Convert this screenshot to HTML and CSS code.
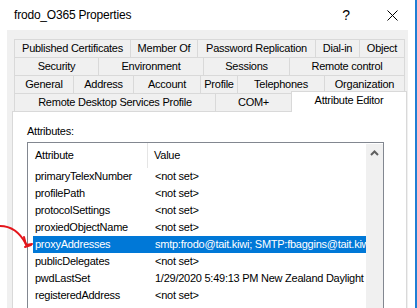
FILE: index.html
```html
<!DOCTYPE html>
<html lang="en">
<head>
  <meta charset="UTF-8" />
  <title>frodo_O365 Properties</title>
  <link rel="stylesheet" href="styles.css">
</head>
<body>
  <div class="window">
    <div class="titlebar">
      <span class="title">frodo_O365 Properties</span>
      <span class="caption-btn help">?</span>
      <span class="caption-btn close">
        <svg width="11" height="11" viewBox="0 0 11 11"><path d="M0.5 0.5 L10.5 10.5 M10.5 0.5 L0.5 10.5" stroke="#000" stroke-width="1" fill="none"/></svg>
      </span>
    </div>

    <div class="dialog">
      <!-- tab strip, four rows -->
      <div class="tabs">
        <div class="tab-row row1">
          <div class="tab">Published Certificates</div>
          <div class="tab">Member Of</div>
          <div class="tab">Password Replication</div>
          <div class="tab">Dial-in</div>
          <div class="tab">Object</div>
        </div>
        <div class="tab-row row2">
          <div class="tab">Security</div>
          <div class="tab">Environment</div>
          <div class="tab">Sessions</div>
          <div class="tab">Remote control</div>
        </div>
        <div class="tab-row row3">
          <div class="tab">General</div>
          <div class="tab">Address</div>
          <div class="tab">Account</div>
          <div class="tab">Profile</div>
          <div class="tab">Telephones</div>
          <div class="tab">Organization</div>
        </div>
        <div class="tab-row row4">
          <div class="tab">Remote Desktop Services Profile</div>
          <div class="tab">COM+</div>
          <div class="tab active">Attribute Editor</div>
        </div>
      </div>

      <div class="panel">
        <div class="label">Attributes:</div>
        <div class="list">
          <div class="list-main">
            <div class="list-header">
              <div class="col-attr">Attribute</div>
              <div class="col-val">Value</div>
            </div>
            <div class="row"><div class="cell-attr">primaryTelexNumber</div><div class="cell-val">&lt;not set&gt;</div></div>
            <div class="row"><div class="cell-attr">profilePath</div><div class="cell-val">&lt;not set&gt;</div></div>
            <div class="row"><div class="cell-attr">protocolSettings</div><div class="cell-val">&lt;not set&gt;</div></div>
            <div class="row"><div class="cell-attr">proxiedObjectName</div><div class="cell-val">&lt;not set&gt;</div></div>
            <div class="row selected"><div class="cell-attr">proxyAddresses</div><div class="cell-val">smtp:frodo@tait.kiwi; SMTP:fbaggins@tait.kiwi</div></div>
            <div class="row"><div class="cell-attr">publicDelegates</div><div class="cell-val">&lt;not set&gt;</div></div>
            <div class="row"><div class="cell-attr">pwdLastSet</div><div class="cell-val">1/29/2020 5:49:13 PM New Zealand Daylight Time</div></div>
            <div class="row"><div class="cell-attr">registeredAddress</div><div class="cell-val">&lt;not set&gt;</div></div>
          </div>
          <div class="scrollbar">
            <svg class="arrow-up" width="9" height="6" viewBox="0 0 9 6"><polyline points="1,5 4.5,1.5 8,5" stroke="#606060" stroke-width="2" fill="none"/></svg>
          </div>
        </div>
      </div>
    </div>

    <!-- hand-drawn red annotation arrow -->
    <svg class="annotation" width="40" height="40" viewBox="0 0 40 40">
      <path d="M0 6 C10 6 19 11 26 24" stroke="#e3151b" stroke-width="2" fill="none" stroke-linecap="round"/>
      <path d="M24 17 L26 25 L32 24" stroke="#e3151b" stroke-width="2" fill="none" stroke-linecap="round" stroke-linejoin="round"/>
      <path d="M25 27 L31 25" stroke="#e3151b" stroke-width="2" fill="none" stroke-linecap="round"/>
    </svg>
  </div>
</body>
</html>
```

FILE: styles.css
```css
body {
  margin: 0;
  font-family: "Liberation Sans", Arial, sans-serif;
  font-size: 11px;
  letter-spacing: -0.25px;
  color: #000;
  background: #fff;
}
.window {
  position: relative;
  width: 415px;
  height: 308px;
  border-right: 2px solid #1f7fd4;
  overflow: hidden;
  background: #fff;
}
.titlebar {
  height: 30px;
  display: flex;
  align-items: center;
}
.title {
  flex: 1;
  margin-left: 14px;
  font-size: 12px;
  letter-spacing: -0.2px;
}
.caption-btn {
  width: 46px;
  height: 30px;
  display: flex;
  align-items: center;
  justify-content: center;
}
.help {
  font-size: 14px;
}
.dialog {
  margin-left: 7px;
  width: 401px;
  height: 278px;
  padding-top: 9px;
  box-sizing: border-box;
  background: #f0f0f0;
}
.tabs {
  margin-left: 7px;
}
.tab-row {
  display: grid;
  grid-template-rows: 18px;
}
.row1 { grid-template-columns: 116px 67px 118px 44px 46px; }
.row2 { grid-template-columns: 84px 105px 86px 116px; }
.row3 { grid-template-columns: 59px 60px 67px 37px 87px 81px; }
.row4 { grid-template-columns: 201px 76px 116px; }
.tab {
  box-sizing: border-box;
  border-top: 1px solid #d9d9d9;
  border-left: 1px solid #d9d9d9;
  background: #f0f0f0;
  text-align: center;
  line-height: 17px;
  white-space: nowrap;
  overflow: hidden;
}
.tab:last-child {
  border-right: 1px solid #d9d9d9;
}
.tab.active {
  position: relative;
  z-index: 1;
  height: 21px;
  margin-top: -2px;
  background: #fff;
  line-height: 17px;
}
.panel {
  margin-left: 5px;
  width: 395px;
  height: 200px;
  box-sizing: border-box;
  border: 1px solid #d9d9d9;
  border-bottom: 0;
  background: #fff;
  padding: 13px 0 0 14px;
}
.label {
  height: 13px;
  line-height: 13px;
  margin-bottom: 4px;
}
.list {
  width: 357px;
  height: 200px;
  box-sizing: border-box;
  border: 1px solid #828790;
  display: flex;
}
.list-main {
  flex: 1;
  overflow: hidden;
}
.list-header {
  display: flex;
  height: 25px;
  line-height: 24px;
}
.col-attr {
  width: 120px;
  padding-left: 7px;
  box-sizing: border-box;
  border-right: 1px solid #e5e5e5;
}
.col-val {
  padding-left: 6px;
}
.row {
  display: flex;
  height: 17px;
  line-height: 17px;
  margin-left: 5px;
  white-space: nowrap;
  overflow: hidden;
}
.cell-attr {
  width: 122px;
  flex: none;
  padding-left: 2px;
  box-sizing: border-box;
}
.cell-val {
  flex: 1;
  overflow: hidden;
}
.row.selected {
  background: #0078d7;
  color: #fff;
}
.scrollbar {
  width: 17px;
  margin-top: 1px;
  background: #f0f0f0;
  display: flex;
  justify-content: center;
}
.arrow-up {
  margin-top: 6px;
}
.annotation {
  position: absolute;
  left: 0;
  top: 220px;
}
```
